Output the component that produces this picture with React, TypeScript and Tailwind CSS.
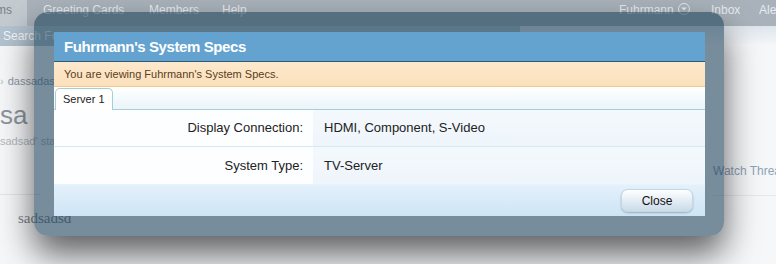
const font = "font-['Liberation_Sans',Arial,sans-serif]";

const NavBar = () => (
  <div className="flex h-[26px] bg-[#a9b2ba] text-[12px] text-[#e6ebef] leading-[18px]">
    <div className="w-[27px] bg-[#c3cad0] text-[#77828c] flex justify-end pr-[15px] pt-[1px]">ms</div>
    <div className="ml-[16px] w-[106px] pt-[1px] whitespace-nowrap">Greeting Cards</div>
    <div className="w-[73px] pt-[1px]">Members</div>
    <div className="w-[40px] pt-[1px]">Help</div>
    <div className="ml-auto flex w-[157px] pt-[1px] whitespace-nowrap overflow-hidden">
      <div className="w-[92px] flex items-start gap-[4px]">
        <span>Fuhrmann</span>
        <span className="mt-[2px] w-[12px] h-[12px] rounded-full border border-[#e6ebef] flex items-center justify-center">
          <svg width="8" height="6" viewBox="0 0 8 6">
            <path d="M1 1.5 L4 4.5 L7 1.5 Z" fill="#e6ebef" />
          </svg>
        </span>
      </div>
      <div className="w-[48px]">Inbox</div>
      <div className="w-[17px] overflow-hidden">Alerts</div>
    </div>
  </div>
);

const SubBar = () => (
  <div className="flex h-[20px] text-[12px] leading-[20px]">
    <div className="w-[520px] bg-[#b2c2cf] text-[#f4f7fa] pl-[3px]">Search Forums</div>
    <div className="flex-1 bg-gradient-to-b from-[#dde5ec] to-[#f6f8fa]" />
  </div>
);

const PageBody = () => (
  <div className="flex">
    <div className="w-[200px]">
      <div className="mt-[28px] h-[14px] text-[11px] leading-[14px] text-[#8b9aab] flex gap-[4px]">
        <span className="text-[#b4bec8]">›</span>
        <span>dassadasdsa</span>
      </div>
      <div className="mt-[12px] text-[26px] leading-[30px] text-[#8c959e]">sa</div>
      <div className="mt-[5px] text-[11px] leading-[13px] text-[#b1b8bf] whitespace-nowrap">sadsad' started this</div>
      <div className="mt-[46px] w-[40px] border-t border-[#e2e6ea]" />
      <div className="mt-[14px] ml-[18px] font-['Liberation_Serif',serif] text-[15px] leading-[18px] text-[#7d848b]">sadsadsd</div>
    </div>
    <div className="ml-auto w-[63px] pt-[118px]">
      <div className="text-[12px] leading-[14px] text-[#8fa2b8] whitespace-nowrap">Watch Thread</div>
      <div className="mt-[17px] border-t border-[#e5e9ec]" />
    </div>
  </div>
);

const Row = ({ label, value, last }: { label: string; value: string; last?: boolean }) => (
  <div className={`flex h-[37px] text-[13px] text-[#222] ${last ? "" : "border-b border-[#d8e8f1]"}`}>
    <div className="w-[259px] bg-[#fdfeff] flex items-center justify-end pr-[10px]">{label}</div>
    <div className="flex-1 bg-gradient-to-b from-[#f4f9fd] to-[#eef5fb] flex items-center pl-[11px]">{value}</div>
  </div>
);

const Overlay = () => (
  <div className="absolute left-[34px] top-[12px] w-[690px] h-[224px] p-[20px] pr-[19px] rounded-[14px] bg-[rgba(22,60,84,0.57)] shadow-[0_18px_34px_rgba(0,0,0,0.62)]">
    <div className="h-[184px] flex flex-col">
      <div className="h-[30px] bg-[#64a3d0] border-b border-[#2b5a7b] text-white font-bold text-[15px] tracking-[-0.4px] leading-[29px] pl-[10px]">
        Fuhrmann's System Specs
      </div>
      <div className="h-[25px] bg-gradient-to-b from-[#fde9cd] to-[#fbe0bb] border-b border-[#efc995] text-[11px] leading-[24px] text-[#5a3d22] pl-[10px]">
        You are viewing Fuhrmann's System Specs.
      </div>
      <div className="h-[23px] bg-gradient-to-b from-[#ffffff] to-[#eaf4fa] border-b border-[#a7cdd5] flex items-end pl-[1px]">
        <div className="w-[58px] h-[22px] -mb-[1px] bg-white border border-b-0 border-[#a7cdd5] rounded-t-[5px] text-[11px] text-[#222] leading-[20px] pl-[7px]">
          Server 1
        </div>
      </div>
      <Row label="Display Connection:" value="HDMI, Component, S-Video" />
      <Row label="System Type:" value="TV-Server" last />
      <div className="flex-1 bg-gradient-to-b from-[#e3f1fb] to-[#cee4f5] border-t border-[#e8f3fb] flex items-center justify-end pr-[12px]">
        <button className="w-[72px] h-[23px] rounded-[7px] bg-gradient-to-b from-white to-[#c9dbea] border border-[#c8d6e2] shadow-[0_1px_2px_rgba(0,0,0,0.25)] text-[12px] text-[#111]">
          Close
        </button>
      </div>
    </div>
  </div>
);

export default function App() {
  return (
    <div className={`relative w-[776px] h-[264px] overflow-hidden bg-[#f5f7f9] ${font}`}>
      <NavBar />
      <SubBar />
      <PageBody />
      <Overlay />
    </div>
  );
}
